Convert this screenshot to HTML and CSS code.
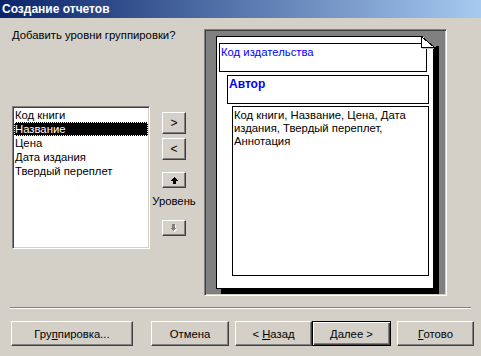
FILE: index.html
```html
<!DOCTYPE html>
<html lang="ru">
<head>
<meta charset="utf-8">
<title>Создание отчетов</title>
<link rel="stylesheet" href="styles.css">
</head>
<body>
<div class="window">
  <div class="titlebar"><span class="title">Создание отчетов</span></div>
  <div class="main">
    <div class="left">
      <div class="prompt">Добавить уровни группировки?</div>
      <ul class="list">
        <li>Код книги</li>
        <li class="sel">Название</li>
        <li>Цена</li>
        <li>Дата издания</li>
        <li>Твердый переплет</li>
      </ul>
    </div>
    <div class="mid">
      <button class="btn sq"><span>&gt;</span></button>
      <button class="btn sq"><span>&lt;</span></button>
      <button class="btn arr up"><svg width="7" height="7" viewBox="0 0 7 7" shape-rendering="crispEdges"><polygon points="3.5,0 7,3.5 5,3.5 5,7 2,7 2,3.5 0,3.5" fill="#000"/></svg></button>
      <div class="level">Уровень</div>
      <button class="btn arr down"><svg width="8" height="8" viewBox="0 0 8 8" shape-rendering="crispEdges"><polygon points="4.5,8 8,4.5 6,4.5 6,1 3,1 3,4.5 1,4.5" fill="#fff"/><polygon points="3.5,7 7,3.5 5,3.5 5,0 2,0 2,3.5 0,3.5" fill="#808080"/></svg></button>
    </div>
    <div class="preview">
      <div class="page">
        <svg class="fold" width="19" height="19" viewBox="0 0 19 19" shape-rendering="crispEdges">
          <polygon points="0,-1 20,-1 20,9 13,11" fill="#808080"/>
          <rect x="1" y="12" width="12" height="1" fill="#c0c0c0"/>
          <polygon points="0.5,0.5 0.5,11.5 13.5,11.5" fill="#fff" stroke="#000" stroke-width="1"/>
        </svg>
        <div class="box b1">Код издательства</div>
        <div class="box b2">Автор</div>
        <div class="box b3">Код книги, Название, Цена, Дата<br>издания, Твердый переплет,<br>Аннотация</div>
      </div>
    </div>
  </div>
  <div class="sep"></div>
  <div class="footer">
    <button class="btn fb w-group"><span>Гру<u>п</u>пировка...</span></button>
    <button class="btn fb w-cancel"><span>Отмена</span></button>
    <button class="btn fb w-back"><span>&lt; <u>Н</u>азад</span></button>
    <button class="btn fb w-next def"><span><u>Д</u>алее &gt;</span></button>
    <button class="btn fb w-done"><span><u>Г</u>отово</span></button>
  </div>
</div>
</body>
</html>
```
FILE: styles.css
```css
html, body {
  margin: 0;
  padding: 0;
  background: #d4d0c8;
}
.window {
  width: 481px;
  height: 356px;
  background: #d4d0c8;
  font-family: "Liberation Sans", Arial, sans-serif;
  font-size: 11.3px;
  line-height: 13px;
  color: #000;
  overflow: hidden;
}
.titlebar {
  height: 18px;
  display: flex;
  align-items: center;
  padding-left: 2px;
  background: linear-gradient(to right, #0a246a, #a6caf0);
}
.title {
  color: #fff;
  font-weight: bold;
  font-size: 12px;
}
.main {
  display: flex;
  padding: 11px 0 0 12px;
  height: 267px;
}
.left {
  width: 138px;
  display: flex;
  flex-direction: column;
}
.prompt {
  white-space: nowrap;
}
.list {
  margin: 64px 0 0 0;
  padding: 0;
  list-style: none;
  width: 138px;
  height: 143px;
  box-sizing: border-box;
  background: #fff;
  border: 1px solid;
  border-color: #808080 #fff #fff #808080;
  box-shadow: inset 1px 1px 0 #404040, inset -1px -1px 0 #d4d0c8;
  padding: 1px;
}
.list li {
  height: 14px;
  line-height: 14px;
  padding-left: 1px;
  white-space: nowrap;
}
.list li.sel {
  background: #000;
  color: #fff;
  outline: 1px dotted #fff;
  outline-offset: -1px;
}
.btn {
  font-family: "Liberation Sans", Arial, sans-serif;
  font-size: 11.3px;
  color: #000;
  background: #d4d0c8;
  margin: 0;
  padding: 0;
  box-sizing: border-box;
  border: 1px solid;
  border-color: #fff #404040 #404040 #fff;
  box-shadow: inset -1px -1px 0 #808080;
  display: flex;
  align-items: center;
  justify-content: center;
  white-space: pre;
}
.mid {
  margin-left: 12px;
  padding-top: 83px;
  display: flex;
  flex-direction: column;
  align-items: center;
  width: 24px;
}
.sq {
  width: 24px;
  height: 22px;
  font-size: 12px;
}
.sq + .sq {
  margin-top: 4px;
}
.arr {
  width: 24px;
  height: 16px;
}
.up {
  margin-top: 12px;
}
.level {
  margin-top: 7px;
  white-space: nowrap;
}
.down {
  margin-top: 12px;
}
.preview {
  margin-left: 18px;
  width: 243px;
  height: 267px;
  box-sizing: border-box;
  border: 1px solid;
  border-color: #808080 #fff #fff #808080;
  box-shadow: inset 1px 1px 0 #404040, inset -1px -1px 0 #d4d0c8;
  background: #808080;
  padding: 6px 0 0 11px;
}
.page {
  position: relative;
  width: 218px;
  height: 253px;
  box-sizing: border-box;
  background: #fff;
  border: 1px solid #000;
  box-shadow: 5px 5px 0 #000;
  padding-top: 6px;
}
.fold {
  position: absolute;
  top: -1px;
  right: -7px;
}
.box {
  box-sizing: border-box;
  border: 1px solid #000;
  background: #fff;
}
.b1 {
  margin-left: 2px;
  width: 208px;
  height: 29px;
  color: #00f;
  padding: 2px 0 0 1px;
}
.b2 {
  margin: 3px 0 0 10px;
  width: 202px;
  height: 29px;
  color: #00f;
  font-weight: bold;
  font-size: 12px;
  padding: 2px 0 0 1px;
}
.b3 {
  margin: 2px 0 0 15px;
  width: 197px;
  height: 170px;
  padding: 2px 0 0 1px;
}
.sep {
  margin: 11px 10px 0 10px;
  height: 0;
  border-top: 1px solid #808080;
  border-bottom: 1px solid #fff;
}
.footer {
  display: flex;
  margin-top: 12px;
  padding-left: 11px;
}
.fb {
  height: 25px;
}
.w-group { width: 122px; }
.w-cancel { width: 78px; margin-left: 18px; }
.w-back { width: 77px; margin-left: 6px; }
.w-next { width: 79px; }
.w-done { width: 77px; margin-left: 6px; }
.def {
  border: 1px solid #000;
  box-shadow: inset 1px 1px 0 #fff, inset -1px -1px 0 #404040, inset -2px -2px 0 #808080;
}
u {
  text-decoration: underline;
}
```
